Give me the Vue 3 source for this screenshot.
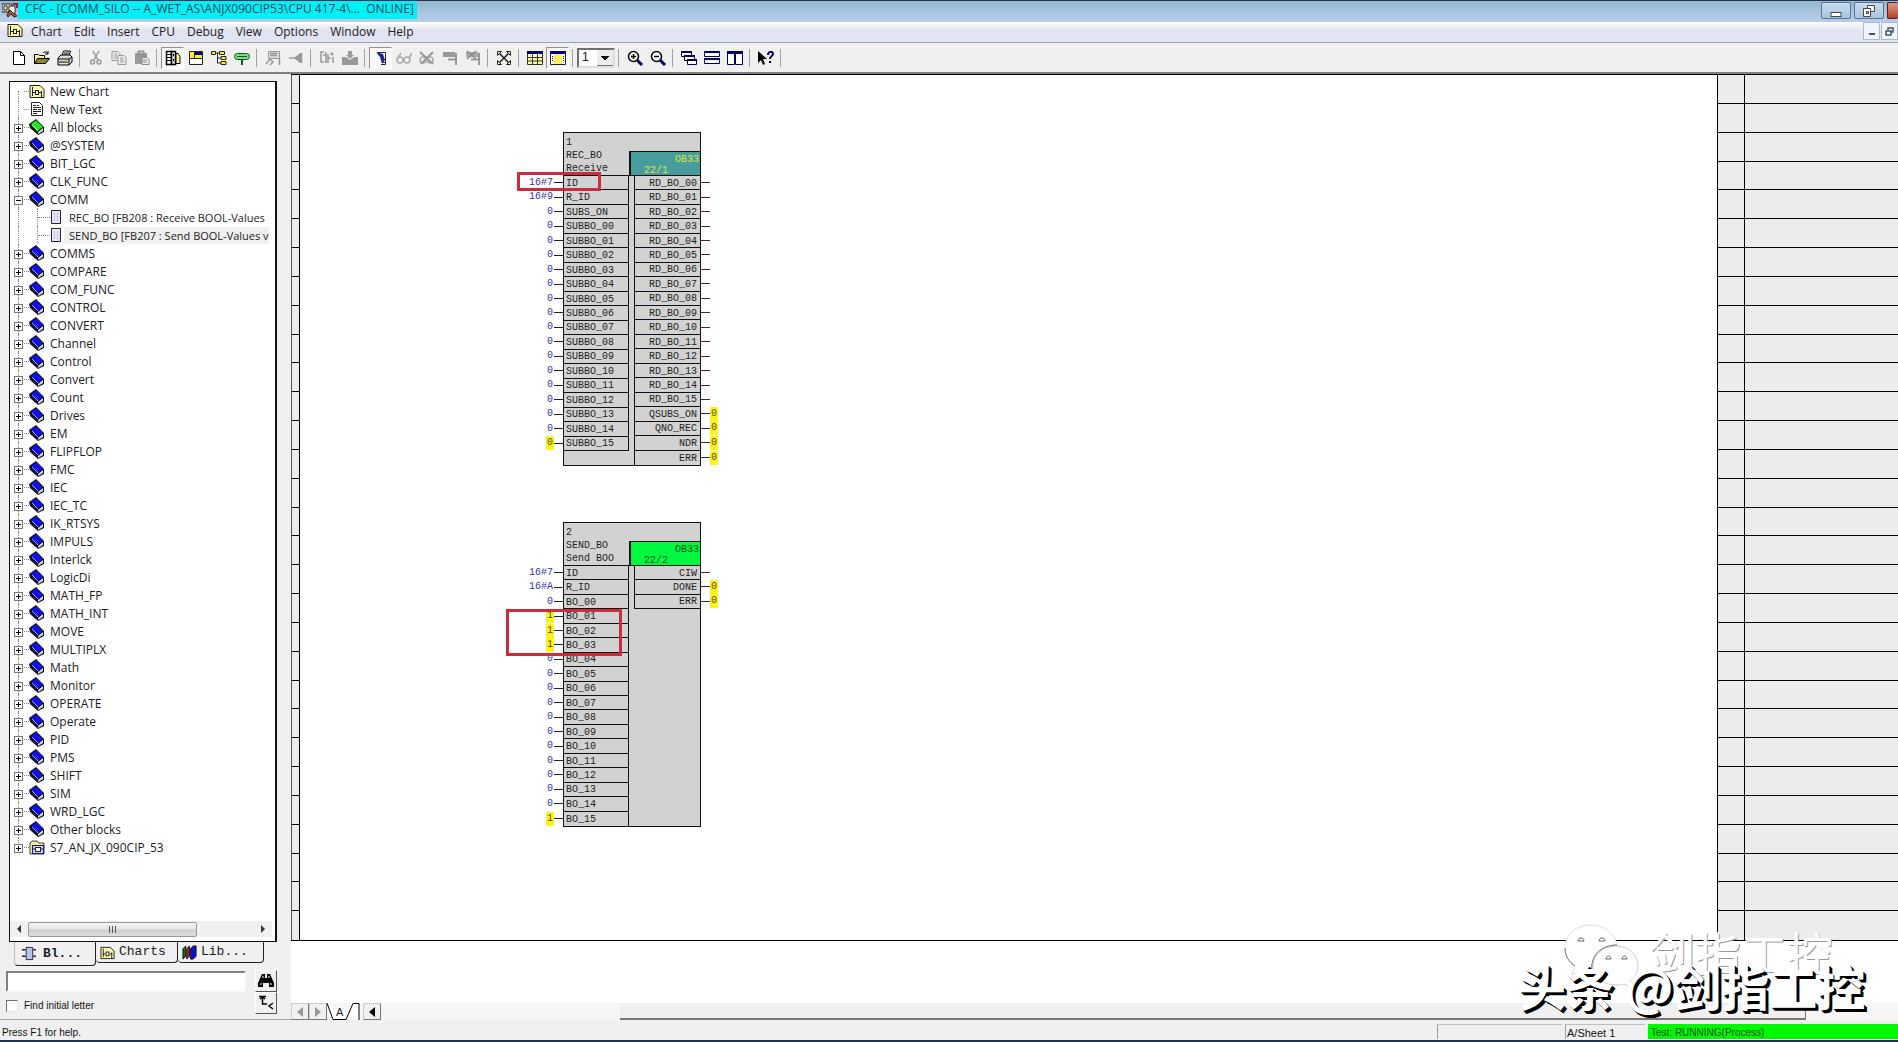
<script setup>
import { ref } from 'vue'

const menus = ['Chart', 'Edit', 'Insert', 'CPU', 'Debug', 'View', 'Options', 'Window', 'Help']

const icons = {
  chart: '<path d="M1 2.5h10l4 4v8H1z" fill="#f7f7a8" stroke="#222"/><path d="M3.5 4v9M12.5 8v6M3 9.5h3M10 9.5h3" stroke="#222"/><rect x="6.5" y="7.5" width="3" height="4" fill="#fff" stroke="#222"/>',
  text: '<path d="M2.500 1.500h8l3 3v10h-11z" fill="#fff" stroke="#222"/><path d="M4 4.500h3M8 4.500h2M4 6.500h8M4 8.500h4M9 8.500h3M4 10.500h8M4 12.500h4" stroke="#222"/>',
  book: '<path d="M0 5L7 0L15 8V13L9 16L1 9z" fill="#112"/><path d="M2 5L7 1.500L14 8L8 12z" fill="#1212e6"/><path d="M9 13l5-4v3l-5 3z" fill="#d8d8d8"/><path d="M3 6l6 6" stroke="#9c9cff"/>',
  green: '<path d="M0 5L7 0L15 8V13L9 16L1 9z" fill="#121"/><path d="M2 5L7 1.500L14 8L8 12z" fill="#22e622"/><path d="M9 13l5-4v3l-5 3z" fill="#d8d8d8"/><path d="M3 6l6 6" stroke="#c8ffc8"/>',
  folder: '<path d="M1 4l2-2h5l2 2h5v11H1z" fill="#f3e9a0" stroke="#444"/><rect x="3.5" y="6.5" width="11" height="8" fill="#cfd0f4" stroke="#224"/><rect x="6.5" y="8.5" width="5" height="4" fill="#fff" stroke="#224"/><path d="M4 10h2M12 10h2" stroke="#224"/>',
  block: '<path d="M3.5 1.5h9v13h-9z" fill="#e4e6f8" stroke="#224"/><path d="M6 5h1M6 8h1M6 11h1M9 5h1M9 8h1M9 11h1" stroke="#99a"/>',
  newdoc: '<path d="M2.5 1.5h7l4 4v9h-11z" fill="#fff" stroke="#000"/><path d="M9.5 1.5v4h4" fill="none" stroke="#000"/>',
  open: '<path d="M.5 13.5v-9h4l1 1h5v3" fill="#f7f7a0" stroke="#000"/><path d="M.5 13.5l3-5h12l-4 5z" fill="#8a8a20" stroke="#000"/><path d="M9 3c2-2 4-1 5 1m0-3v3h-3" fill="none" stroke="#000"/>',
  print: '<path d="M5 6l1.5-5h7L12 6" fill="#fff" stroke="#000"/><path d="M7 3h5M6.5 5h5" stroke="#000"/><path d="M1 8l3-3h9l2 2v5l-3 3H1z" fill="#ddd" stroke="#000"/><path d="M1 9h11l3-2M12 9v6M2 12h9" fill="none" stroke="#000"/><path d="M8 11h3" stroke="#c8c800"/>',
  cut: '<path d="M5 1l5 9M11 1L6 10" stroke="#999" stroke-width="1.5"/><circle cx="4.5" cy="12" r="2" fill="none" stroke="#999" stroke-width="1.5"/><circle cx="11" cy="12" r="2" fill="none" stroke="#999" stroke-width="1.5"/>',
  copy: '<path d="M1 1.5h6l2 2v7H1z" fill="#eee" stroke="#999"/><path d="M7 5.5h6l2 2v7H7z" fill="#eee" stroke="#999"/><path d="M3 4h3M3 6h3M3 8h3M9 8h3M9 10h4M9 12h4" stroke="#999"/>',
  paste: '<path d="M1 3h12v11H1z" fill="#999"/><path d="M4 1h6v3H4z" fill="#bbb" stroke="#888"/><path d="M8 7.5h5l2 2v5H8z" fill="#eee" stroke="#888"/><path d="M9 10h4M9 12h4" stroke="#888"/>',
  catalog: '<path d="M1.500 1.500h5v13h-5z" fill="#fff" stroke="#000" stroke-width="1.5"/><path d="M1 4.500h5M1 7.500h5M1 10.500h5" stroke="#000"/><path d="M6.500 1.500h4v13h-4z" fill="#ddd" stroke="#000" stroke-width="1.5"/><path d="M8.500 4v2M8.500 9v2" stroke="#000"/><path d="M11 3.500h2l2 3v7h-4z" fill="#f3f3a0" stroke="#000"/>',
  overview: '<path d="M1.5 1.5h13v13h-13z" fill="#fff" stroke="#222"/><path d="M2 2h12v6H2z" fill="#ffee20"/><path d="M7 2h7v3H7z" fill="#000080"/><path d="M2 8.5h12M6.500 2v6" stroke="#222"/>',
  tree: '<path d="M.5 1.5h4v3h-4zM8.500 1.5h5v3h-5zM10 6.5h5v3h-5zM10 11.5h5v3h-5z" fill="#ffee20" stroke="#222"/><path d="M5 3h3M6.5 3v10H10M6.5 8H10" fill="none" stroke="#222"/>',
  sign: '<rect x=".5" y="3.5" width="15" height="6" rx="3" fill="#7be07b" stroke="#153"/><path d="M3 6.500h10" stroke="#153"/><path d="M8 10v5" stroke="#153" stroke-width="2"/>',
  find: '<path d="M3.500 1.500h11v7h-11z" fill="#ddd" stroke="#999"/><path d="M5 3.500h7M5 5.500h7M14.500 8v7M1 14l4-5 3 3-3 3" stroke="#999" stroke-width="1.5" fill="none"/>',
  pin: '<path d="M1 8h8M7 8l5-4v8zM13.500 3v10" stroke="#999" stroke-width="1.5" fill="#999"/>',
  compile: '<path d="M5 2H2v10h3M7 2v11M4 5h3M9 4v9M9 8h3M14 7v6" stroke="#999" stroke-width="1.5" fill="none"/><circle cx="13" cy="4" r="1.5" fill="#999"/>',
  download: '<path d="M0 7h4l4 3 4-3h4v8H0z" fill="#999"/><path d="M6 1h4v4h2L8 9 4 5h2z" fill="#999"/>',
  test: '<path d="M5 2.500h7.500v12H8" fill="#fff" stroke="#224"/><path d="M3 2l7 2 2 6-3 4-2-7z" fill="#22228c"/><path d="M10 12.500h2" stroke="#224"/>',
  glasses: '<circle cx="4" cy="10" r="3" fill="none" stroke="#aaa" stroke-width="1.5"/><circle cx="11" cy="10" r="3" fill="none" stroke="#aaa" stroke-width="1.5"/><path d="M2 8l3-5M13 8l3-5M7 9h1" stroke="#aaa" stroke-width="1.5"/>',
  noglasses: '<circle cx="4" cy="10" r="3" fill="none" stroke="#aaa" stroke-width="1.5"/><circle cx="11" cy="10" r="3" fill="none" stroke="#aaa" stroke-width="1.5"/><path d="M1 2l13 12M14 2L2 14" stroke="#999" stroke-width="2"/>',
  watch: '<path d="M1 2h12v5H1z" fill="#999"/><path d="M6 9.500h9M14 3v12" stroke="#999" stroke-width="2"/>',
  unwatch: '<path d="M1 2h12v5H1z" fill="#aaa"/><path d="M6 9.500h9M14 3v12" stroke="#999" stroke-width="2"/><path d="M2 1l9 8M11 1l-9 8" stroke="#888" stroke-width="1.5"/>',
  fit: '<path d="M3 3l10 10M13 3L3 13" stroke="#222" stroke-width="1.5"/><path d="M1.5 5.5v-4h4zM10.5 1.5h4v4zM14.5 10.5v4h-4zM5.5 14.5h-4v-4z" fill="#f3f3a0" stroke="#222"/>',
  table: '<path d="M.5 1.5h15v13H.5z" fill="#ffffb0" stroke="#332"/><path d="M0 1h16v3H0z" fill="#000080"/><path d="M1 7.500h14M1 11h14M5.5 4v10M10.5 4v10" stroke="#332"/>',
  sheet: '<path d="M.5 1.5h15v13H.5z" fill="#fff" stroke="#222"/><path d="M0 1h16v3H0z" fill="#000080"/><path d="M4 4h8v10H4z" fill="#ffee60"/><path d="M2 6.500h1M2 8.500h1M2 10.500h1M13 6.500h1M13 8.500h1M13 10.500h1" stroke="#222"/>',
  zoomin: '<circle cx="6.5" cy="6.5" r="5" fill="#fff" stroke="#000" stroke-width="1.5"/><path d="M4 6.5h5M6.5 4v5" stroke="#000" stroke-width="1.5"/><path d="M10 10l5 5" stroke="#000060" stroke-width="3"/>',
  zoomout: '<circle cx="6.5" cy="6.5" r="5" fill="#fff" stroke="#000" stroke-width="1.5"/><path d="M4 6.5h5" stroke="#000" stroke-width="1.5"/><path d="M10 10l5 5" stroke="#000060" stroke-width="3"/>',
  cascade: '<path d="M.5 1.5h10v5H.5zM3.5 5.5h10v5h-10zM6.500 9.500h9v5h-9z" fill="#fff" stroke="#000060"/><path d="M0 2h11M3 6h11M6 10h10" stroke="#000060" stroke-width="2"/>',
  tileh: '<path d="M.5 1.5h15v5H.5zM.5 8.5h15v5H.5z" fill="#fff" stroke="#000060"/><path d="M0 2h16M0 9h16" stroke="#000060" stroke-width="2"/>',
  tilev: '<path d="M.5 1.5h7v13h-7zM8.5 1.5h7v13h-7z" fill="#fff" stroke="#000060"/><path d="M0 2.5h16" stroke="#000060" stroke-width="3"/>',
  help: '<path d="M0 1v12l3-3 2 5 2-1-2-5h4z" fill="#000"/><path d="M10 5c0-4 5-4 5-1 0 2-3 2-3 5M12 11v2" fill="none" stroke="#000060" stroke-width="2"/>',
  module: '<path d="M5.5 1.5h7v13h-7z" fill="#b8c4ec" stroke="#224"/><path d="M1 4h4M1 11h4M13 4h3M13 11h3" stroke="#224" stroke-width="1.5"/>',
  lib: '<path d="M1 4l3-3v11l-3 3z" fill="#1a6a2a" stroke="#111"/><path d="M5 4l3-3v11l-3 3z" fill="#b02020" stroke="#111"/><path d="M9 4l3-3h3v11l-3 3H9z" fill="#1010c8" stroke="#111"/>',
  binoc: '<path d="M4 1h3v4h2V1h3l4 9v4h-5v-4H5v4H0v-4z" fill="#000"/><path d="M5 3v2M11 3v2M3 10v2M13 10v2" stroke="#fff"/>',
  jump: '<path d="M1 1.5h7M4.5 2v7H9M2 4l2.5-2L7 4M15 8l-4 3 4 3" fill="none" stroke="#000" stroke-width="1.5"/>',
  app: '<path d="M0 2h10v8H0z" fill="#e4dcc0" stroke="#222"/><path d="M2 4h3v4H2zM7 4h6v8H7z" fill="#fff" stroke="#222"/><path d="M5 13l3-5 2 2 5 4-3 1-3-3-3 3z" fill="#b8541c" stroke="#222"/><path d="M11 2h4v4" fill="none" stroke="#922" stroke-width="2"/>'
}

const tools = [
  ['newdoc', 'New'], ['open', 'Open'], ['print', 'Print'], null,
  ['cut', 'Cut'], ['copy', 'Copy'], ['paste', 'Paste'], null,
  ['catalog', 'Catalog', true], ['overview', 'Overview'], ['tree', 'Runtime sequence'], ['sign', 'Reference data'], null,
  ['find', 'Find'], ['pin', 'Jump'], null,
  ['compile', 'Compile'], ['download', 'Download'], null,
  ['test', 'Test mode', true], ['glasses', 'Watch on'], ['noglasses', 'Watch off'], ['watch', 'Register'], ['unwatch', 'Unregister'], null,
  ['fit', 'Fit'], null,
  ['table', 'Chart view'], ['sheet', 'Sheet view', true], null,
  'combo', null,
  ['zoomin', 'Zoom in'], ['zoomout', 'Zoom out'], null,
  ['cascade', 'Cascade'], ['tileh', 'Tile horizontally'], ['tilev', 'Tile vertically'], null,
  ['help', 'Context help'], null
]

const books = names => names.map(label => ({ label, icon: 'book', sign: '+' }))
const tree = [
  { label: 'New Chart', icon: 'chart' },
  { label: 'New Text', icon: 'text' },
  { label: 'All blocks', icon: 'green', sign: '+' },
  ...books(['@SYSTEM', 'BIT_LGC', 'CLK_FUNC']),
  { label: 'COMM', icon: 'book', sign: '-' },
  { label: 'REC_BO [FB208 : Receive BOOL-Values', icon: 'block', child: true },
  { label: 'SEND_BO [FB207 : Send BOOL-Values v', icon: 'block', child: true, selected: true },
  ...books([
    'COMMS', 'COMPARE', 'COM_FUNC', 'CONTROL', 'CONVERT', 'Channel', 'Control', 'Convert', 'Count',
    'Drives', 'EM', 'FLIPFLOP', 'FMC', 'IEC', 'IEC_TC', 'IK_RTSYS', 'IMPULS', 'Interlck', 'LogicDi',
    'MATH_FP', 'MATH_INT', 'MOVE', 'MULTIPLX', 'Math', 'Monitor', 'OPERATE', 'Operate', 'PID', 'PMS',
    'SHIFT', 'SIM', 'WRD_LGC', 'Other blocks'
  ]),
  { label: 'S7_AN_JX_090CIP_53', icon: 'folder', sign: '+', last: true }
]

const pad = n => String(n).padStart(2, '0')
const range = n => Array.from({ length: n }, (_, i) => i)

const nodes = [
  {
    key: 'receive', no: '1', name: 'REC_BO', comment: 'Receive', ob: 'OB33', pos: '22/1', rows: 20,
    inputs: [
      { name: 'ID', value: '16#7' }, { name: 'R_ID', value: '16#9' }, { name: 'SUBS_ON', value: '0' },
      ...range(16).map(i => ({ name: 'SUBBO_' + pad(i), value: '0', live: i === 15 }))
    ],
    outputs: [
      ...range(16).map(i => ({ name: 'RD_BO_' + pad(i) })),
      ...['QSUBS_ON', 'QNO_REC', 'NDR', 'ERR'].map(name => ({ name, value: '0' }))
    ]
  },
  {
    key: 'send', no: '2', name: 'SEND_BO', comment: 'Send BOO', ob: 'OB33', pos: '22/2', rows: 18,
    inputs: [
      { name: 'ID', value: '16#7' }, { name: 'R_ID', value: '16#A' },
      ...range(16).map(i => {
        const live = [1, 2, 3, 15].includes(i)
        return { name: 'BO_' + pad(i), value: live ? '1' : '0', live }
      })
    ],
    outputs: [{ name: 'CIW' }, { name: 'DONE', value: '0' }, { name: 'ERR', value: '0' }]
  }
]

const zoom = ref('1')
const query = ref('')
const initial = ref(false)
</script>

<template>
  <div class="window">
    <header class="titlebar">
      <svg class="icon" viewBox="0 0 16 16" v-html="icons.app"></svg>
      <h1 class="title">CFC - [COMM_SILO -- A_WET_AS\ANJX090CIP53\CPU 417-4\...&nbsp; ONLINE]</h1>
      <div class="winbtns">
        <button class="winbtn" aria-label="Minimize"><svg width="12" height="14" viewBox="0 0 12 14"><rect x="1" y="8.5" width="10" height="4" fill="#fff" stroke="#445" /></svg></button>
        <button class="winbtn" aria-label="Restore"><svg width="12" height="14" viewBox="0 0 12 14"><path d="M4.5 1.5h7v6h-7z" fill="#fff" stroke="#445" /><path d="M.5 4.5h7v8h-7z" fill="#fff" stroke="#445" /><path d="M3.5 7.5h2v2h-2z" fill="#9bc" stroke="#445" /></svg></button>
        <button class="winbtn close" aria-label="Close"></button>
      </div>
    </header>

    <nav class="menubar">
      <svg class="icon" viewBox="0 0 16 16" v-html="icons.chart"></svg>
      <button v-for="m in menus" :key="m" class="menu">{{ m }}</button>
      <div class="mdi">
        <button class="mdibtn" aria-label="Minimize chart"><svg width="8" height="10" viewBox="0 0 8 10"><path d="M1 8h6" stroke="#456" stroke-width="2" /></svg></button>
        <button class="mdibtn" aria-label="Restore chart"><svg width="9" height="9" viewBox="0 0 9 9"><path d="M3 3V1h5v4H6M1 4h5v4H1z" fill="none" stroke="#456" stroke-width="1.5" /></svg></button>
      </div>
    </nav>

    <div class="toolbar">
      <template v-for="(t, i) in tools" :key="i">
        <span v-if="!t" class="sep"></span>
        <select v-else-if="t === 'combo'" v-model="zoom" class="combo" aria-label="Zoom level">
          <option>1</option>
          <option>2</option>
        </select>
        <button v-else class="tool" :class="{ pressed: t[2] }" :aria-label="t[1]">
          <svg class="icon" viewBox="0 0 16 16" v-html="icons[t[0]]"></svg>
        </button>
      </template>
    </div>

    <main class="main">
      <aside class="side">
        <div class="treebox">
          <ul class="tree">
            <li v-for="item in tree" :key="item.label" class="node" :class="{ child: item.child, last: item.last, selected: item.selected }">
              <button v-if="item.sign" class="sign" :class="{ open: item.sign === '-' }" :aria-label="'Toggle ' + item.label"></button>
              <span v-else class="nosign"></span>
              <span v-if="item.child" class="branch"></span>
              <svg class="icon" viewBox="0 0 16 16" v-html="icons[item.icon]"></svg>
              <span class="label">{{ item.label }}</span>
            </li>
          </ul>
          <div class="hscroll">
            <button class="arrow left" aria-label="Scroll left"></button>
            <span class="thumb"><i></i><i></i><i></i></span>
            <span class="fill"></span>
            <button class="arrow right" aria-label="Scroll right"></button>
          </div>
        </div>
        <div class="tabs">
          <button class="tab active"><svg class="icon" viewBox="0 0 16 16" v-html="icons.module"></svg>Bl...</button>
          <button class="tab"><svg class="icon" viewBox="0 0 16 16" v-html="icons.chart"></svg>Charts</button>
          <button class="tab"><svg class="icon" viewBox="0 0 16 16" v-html="icons.lib"></svg>Lib...</button>
        </div>
        <div class="search">
          <div class="fields">
            <input v-model="query" class="query" type="text" aria-label="Find block">
            <label class="check"><input v-model="initial" type="checkbox">Find initial letter</label>
          </div>
          <div class="searchbtns">
            <button class="sbtn" aria-label="Search"><svg class="icon" viewBox="0 0 16 16" v-html="icons.binoc"></svg></button>
            <button class="sbtn" aria-label="Back to top"><svg class="icon" viewBox="0 0 16 16" v-html="icons.jump"></svg></button>
          </div>
        </div>
      </aside>

      <section class="work">
        <div class="sheet">
          <div class="ruler"><i v-for="n in 30" :key="n"></i></div>
          <div class="canvas">
            <article v-for="b in nodes" :key="b.key" class="fb" :class="b.key">
              <div class="head">
                <div class="names"><div>{{ b.no }}</div><div>{{ b.name }}</div><div>{{ b.comment }}</div></div>
                <div class="task"><span class="ob">{{ b.ob }}</span><span>{{ b.pos }}</span></div>
              </div>
              <div class="ports" :class="'rows' + b.rows">
                <div class="inputs">
                  <div v-for="p in b.inputs" :key="p.name" class="port in">
                    <span class="wire"><b :class="{ live: p.live }">{{ p.value }}</b></span>{{ p.name }}
                  </div>
                </div>
                <div class="outputs">
                  <div v-for="p in b.outputs" :key="p.name" class="port out">
                    {{ p.name }}<span class="wire"><b v-if="p.value" class="live">{{ p.value }}</b></span>
                  </div>
                </div>
              </div>
            </article>
            <span class="mark one"></span>
            <span class="mark two"></span>
          </div>
          <div class="ruler wide"><i v-for="n in 30" :key="n"></i></div>
          <div class="ruler margin"><i v-for="n in 30" :key="n"></i></div>
        </div>
        <div class="below"></div>
        <div class="sheetbar">
          <button class="nav" aria-label="Previous sheet"><span class="arrow left"></span></button>
          <button class="nav" aria-label="Next sheet"><span class="arrow right"></span></button>
          <button class="sheettab">
            <svg width="34" height="17" viewBox="0 0 34 17"><path d="M0 0l6 16.5h13L26 .5h6V17" fill="#fff" stroke="#000" /></svg>
            <span>A</span>
          </button>
          <button class="nav dark" aria-label="Scroll sheet left"><span class="arrow left"></span></button>
          <span class="gap"></span>
          <span class="bar"></span>
          <span class="rest"></span>
        </div>
      </section>
    </main>

    <footer class="status">
      <span class="hint">Press F1 for help.</span>
      <span class="cell blank"></span>
      <span class="cell page">A/Sheet 1</span>
      <span class="cell run">Test: RUNNING(Process)</span>
    </footer>

    <div class="watermark">
      <div class="ghost">
        <svg width="76" height="62" viewBox="0 0 76 62">
          <path d="M27 1C12 1 1 11 1 24c0 8 4 14 10 18l-3 9 10-5c3 1 6 1 10 1-2-14 8-26 25-26C51 9 40 1 27 1z" fill="#fff" stroke="#ddd" />
          <path d="M52 22c-13 0-23 9-23 20s10 19 23 19c3 0 6 0 8-1l8 4-2-7c5-4 8-9 8-15 0-11-9-20-22-20z" fill="#fff" stroke="#ccc" />
          <path d="M1 24c0 8 4 14 10 18M28 47c-2-14 8-26 25-26" fill="none" stroke="#777" />
          <path d="M14 17c0-4 6-4 6 0zM35 17c0-4 6-4 6 0zM42 35c0-4 5-4 5 0zM58 35c0-4 5-4 5 0z" fill="#fff" stroke="#666" />
        </svg>
        <span>剑指工控</span>
      </div>
      <div class="brand">头条 @剑指工控</div>
    </div>
  </div>
</template>

<style>
body { margin: 0; background: #f0f0f0; }
</style>

<style scoped>
.window {
  position: relative;
  display: flex;
  flex-direction: column;
  box-sizing: border-box;
  min-height: 100vh;
  overflow: hidden;
  border-top: 1px solid #2b2f4c;
  border-bottom: 2px solid #1f3350;
  background: #f0f0f0;
  color: #1c1c24;
  font: 12px/18px "Open Sans", "Noto Sans", sans-serif;
}
button { margin: 0; padding: 0; border: 0; background: none; color: inherit; font: inherit; }
.icon { display: block; flex: none; width: 16px; height: 16px; }

.titlebar {
  display: flex;
  height: 21px;
  padding-left: 2px;
  background: linear-gradient(#8fb9cc, #a9c3df 50%, #b9cdea);
}
.titlebar .icon { margin-top: 1px; }
.title { margin: 0; padding: 0 3px 0 7px; height: 18px; background: #00f0f8; color: #0b4a5c; font-size: 12px; line-height: 16px; font-weight: 400; white-space: nowrap; }
.winbtns { display: flex; gap: 3px; margin-left: auto; padding-top: 1px; }
.winbtn { display: grid; place-items: center; box-sizing: border-box; width: 30px; height: 17px; border: 1px solid #5c7396; border-radius: 2px; background: linear-gradient(#c9dcee, #a9c4de); }
.winbtn.close { width: 11px; border-right: 0; border-color: #5a2020; background: linear-gradient(#d99a8c, #b8402a); }

.menubar { display: flex; height: 20px; padding-left: 7px; border-bottom: 1px solid #a0a0a8; background: linear-gradient(#fff, #e2e4f0 40%, #dfe5f2); }
.menubar .icon { margin-right: 2px; }
.menu { height: 20px; padding: 0 6px; line-height: 18px; }
.mdi { display: flex; gap: 1px; margin-left: auto; }
.mdibtn { display: grid; place-items: center; box-sizing: border-box; width: 17px; height: 18px; border: 1px solid #a8bcd0; background: #f1f5fb; }

.toolbar { display: flex; align-items: center; height: 29px; padding-left: 7px; border-bottom: 2px solid #808080; }
.tool { display: grid; place-items: center; box-sizing: border-box; width: 23px; height: 22px; }
.tool.pressed { border: 1px solid; border-color: #909090 #fff #fff #909090; background: #f8f8f8; }
.sep { width: 1px; height: 18px; margin: 0 4px 0 3px; background: #a0a0a0; }
.combo {
  box-sizing: border-box;
  width: 38px;
  height: 20px;
  padding: 0 0 0 3px;
  border: 2px solid;
  border-color: #707070 #ddd #ddd #707070;
  border-radius: 0;
  appearance: none;
  color: #111;
  font: 12px/15px "Liberation Sans", sans-serif;
  background:
    linear-gradient(45deg, transparent 50%, #000 50%) right 8px center / 4px 4px no-repeat,
    linear-gradient(315deg, transparent 50%, #000 50%) right 4px center / 4px 4px no-repeat,
    linear-gradient(#777, #777) right bottom / 16px 1px no-repeat,
    linear-gradient(#ececec, #ececec) right / 16px 100% no-repeat,
    #fff;
}

.main { display: flex; flex: 1; min-height: 0; }
.side { display: flex; flex-direction: column; box-sizing: border-box; flex: none; width: 291px; padding: 7px 0 5px 6px; border-bottom: 1px solid #a0a0a0; }
.treebox { display: flex; flex: 1; flex-direction: column; box-sizing: border-box; width: 268px; margin-left: 3px; padding-right: 3px; border: 1px solid #111; border-right-width: 2px; background: #fff; }
.tree { flex: 1; margin: 0; padding: 0; list-style: none; }
.node { position: relative; display: flex; align-items: center; height: 18px; overflow: hidden; white-space: nowrap; }
.node::before { content: ""; position: absolute; left: 8px; top: 0; height: 18px; border-left: 1px dotted #888; }
.node:first-child::before { top: 9px; }
.node.last::before { height: 9px; }
.node::after { content: ""; position: absolute; left: 14px; top: 9px; width: 5px; border-top: 1px dotted #888; }
.node.child::after { left: 28px; width: 12px; }
.sign { position: relative; z-index: 1; flex: none; width: 9px; height: 9px; margin: 2px 6px 0 4px; box-sizing: border-box; border: 1px solid #777; background: linear-gradient(#000, #000) center / 5px 1px no-repeat, linear-gradient(#000, #000) center / 1px 5px no-repeat, #fff; }
.sign.open { background: linear-gradient(#000, #000) center / 5px 1px no-repeat, #fff; }
.nosign { flex: none; width: 19px; }
.branch { flex: none; box-sizing: border-box; width: 11px; height: 18px; margin-left: 8px; border-left: 1px dotted #888; }
.label { padding-left: 5px; line-height: 17px; }
.child .label { font-size: 11px; }
.selected .label { background: #f0f0f0; }

.hscroll { display: flex; align-items: center; height: 16px; margin-bottom: 4px; background: #f0f0f0; }
.hscroll .arrow { margin: 0 7px; }
.arrow { display: block; width: 0; height: 0; border: 4px solid transparent; }
.arrow.left { border-right: 4px solid #333; border-left-width: 0; }
.arrow.right { border-left: 4px solid #333; border-right-width: 0; }
.thumb { display: flex; align-items: center; justify-content: center; gap: 2px; box-sizing: border-box; width: 169px; height: 15px; border: 1px solid #999; border-radius: 2px; background: linear-gradient(#f4f4f4, #e6e6e6 45%, #cfcfcf 55%, #dcdcdc); }
.thumb i { width: 1px; height: 7px; background: #555; }
.fill { flex: 1; }

.tabs { display: flex; align-items: flex-start; padding-left: 8px; font: 13px/20px "Liberation Mono", monospace; }
.tab { display: flex; align-items: center; gap: 4px; box-sizing: border-box; width: 82px; height: 21px; padding-left: 4px; border: 1px solid #222; border-top: 0; border-left: 0; border-radius: 0 0 4px 4px; }
.tab.active { gap: 7px; height: 24px; padding-left: 6px; border-left: 1px solid #bbb; font-weight: 700; }
.tab:last-child { width: 86px; }
.tab .icon { width: 15px; height: 15px; }

.search { display: flex; padding-top: 4px; }
.fields { width: 240px; }
.query { display: block; box-sizing: border-box; width: 240px; height: 21px; margin-top: 1px; border: 2px solid; border-color: #808080 #f8f8f8 #f8f8f8 #808080; background: #fff; font: 12px "Liberation Sans", sans-serif; }
.check { display: flex; align-items: center; gap: 6px; padding-top: 6px; font: 10px/16px "Liberation Sans", sans-serif; color: #111; }
.check input { appearance: none; width: 12px; height: 12px; margin: 0; border: 1px solid; border-color: #707070 #e4e4e4 #e4e4e4 #707070; background: #fff; }
.searchbtns { margin-left: 9px; }
.sbtn { display: grid; place-items: center; box-sizing: border-box; width: 22px; height: 22px; border: 1px solid; border-color: #fff #555 #555 #fff; }

.work { display: flex; flex: 1; flex-direction: column; min-width: 0; background: #fff; }
.sheet { display: flex; flex: 1; border-top: 1px solid #000; border-bottom: 1px solid #000; }
.ruler { display: grid; grid-auto-rows: minmax(0, 1fr); flex: none; box-sizing: border-box; width: 9px; border-left: 1px solid #555; border-right: 1px solid #000; background: #ececec; }
.ruler i { border-bottom: 1px solid #000; }
.ruler i:last-child { border-bottom: 0; }
.ruler.wide { width: 28px; border-color: #000; }
.ruler.margin { width: 153px; border: 0; }
.canvas { position: relative; flex: 1; overflow: hidden; }
.below { height: 62px; }

.fb { position: absolute; left: 263px; width: 136px; border: 1px solid #111; background: #d2d2d2; color: #222; font: 10px/13px "Liberation Mono", monospace; }
.fb.receive { top: 57px; }
.fb.send { top: 447px; }
.head { display: flex; justify-content: space-between; height: 42px; border-bottom: 1px solid #111; }
.names { padding: 3px 0 0 2px; white-space: nowrap; }
.task { display: flex; flex-direction: column; box-sizing: border-box; width: 71px; margin-top: 18px; padding: 2px 0 0 13px; border-top: 1px solid #111; border-left: 2px solid #111; background: #489c9c; color: #d8e840; line-height: 11px; }
.send .task { background: #00f840; color: #14501c; }
.ob { align-self: flex-end; padding-right: 1px; }
.ports { display: flex; justify-content: space-between; }
.rows20 { height: 289px; }
.rows18 { height: 260px; }
.inputs, .outputs { display: grid; grid-auto-rows: minmax(0, 1fr); box-sizing: border-box; }
.inputs { width: 65px; }
.outputs { width: 66px; }
.rows20 .inputs { height: 275px; }
.rows18 .outputs { height: 43px; }
.port { position: relative; display: flex; align-items: center; box-sizing: border-box; padding-top: 1px; border: 0 solid #111; border-bottom-width: 1px; }
.in { padding-left: 2px; border-right-width: 1px; }
.out { justify-content: flex-end; padding-right: 3px; border-left-width: 1px; }
.rows18 .in:last-child, .rows20 .out:last-child { border-bottom: 0; }
.wire { position: absolute; top: 0; bottom: 0; display: flex; align-items: center; }
.in .wire { right: 100%; }
.out .wire { left: 100%; }
.wire::before { content: ""; width: 10px; height: 1px; background: #5c1c28; }
.in .wire::before { order: 1; background: #222; }
.wire b { font-weight: 400; color: #3434a8; padding: 0 1px; line-height: 14px; }
.wire .live { background: #fff21c; color: #55500c; }

.mark { position: absolute; box-sizing: border-box; border: 3px solid #cc2c3c; }
.mark.one { left: 217px; top: 97px; width: 84px; height: 19px; }
.mark.two { left: 206px; top: 534px; width: 116px; height: 47px; }

.sheetbar { display: flex; height: 17px; background: #f6f6f6; }
.nav { display: grid; place-items: center; box-sizing: border-box; width: 18px; height: 17px; border: 1px solid; border-color: #ccc #777 #777 #ccc; background: #f0f0f0; }
.nav .arrow { border-top-width: 5px; border-bottom-width: 5px; }
.nav .left { border-right: 6px solid #999; }
.nav .right { border-left: 6px solid #999; }
.nav.dark { margin-left: 2px; }
.nav.dark .left { border-right-color: #000; }
.sheettab { position: relative; width: 34px; height: 17px; }
.sheettab svg { display: block; }
.sheettab span { position: absolute; left: 9px; top: 2px; font: 11px/14px "Liberation Sans", sans-serif; }
.gap { width: 239px; }
.bar { flex: 1; box-sizing: border-box; border-right: 1px solid #777; border-bottom: 2px solid #777; background: #f0f0f0; }
.rest { width: 92px; }

.status { display: flex; align-items: flex-start; gap: 3px; box-sizing: border-box; height: 20px; padding: 4px 0 0 2px; font: 11px/17px "Liberation Sans", sans-serif; color: #111; }
.hint { flex: 1; font-size: 10px; }
.cell { box-sizing: border-box; height: 15px; padding-left: 1px; border-left: 1px solid #a0a0a0; border-top: 1px solid #c0c0c0; line-height: 16px; }
.blank { width: 125px; }
.page { width: 80px; }
.run { width: 250px; border: 0; padding-left: 3px; background: #00f800; color: #145014; font-size: 10px; line-height: 17px; }

.watermark { position: absolute; right: 30px; bottom: 28px; width: 350px; pointer-events: none; font-family: "Noto Sans CJK SC", sans-serif; white-space: nowrap; }
.ghost { display: flex; gap: 9px; margin-left: 46px; height: 32px; color: #fff; font-size: 46px; line-height: 50px; text-shadow: 1px 1px 0 #999; }
.ghost svg { flex: none; margin-top: -2px; }
.brand { color: #fff; font-size: 48px; line-height: 54px; font-weight: 700; text-shadow: 1px 1px 0 #000, 2px 2px 0 #000, 3px 3px 0 #000; }
</style>
